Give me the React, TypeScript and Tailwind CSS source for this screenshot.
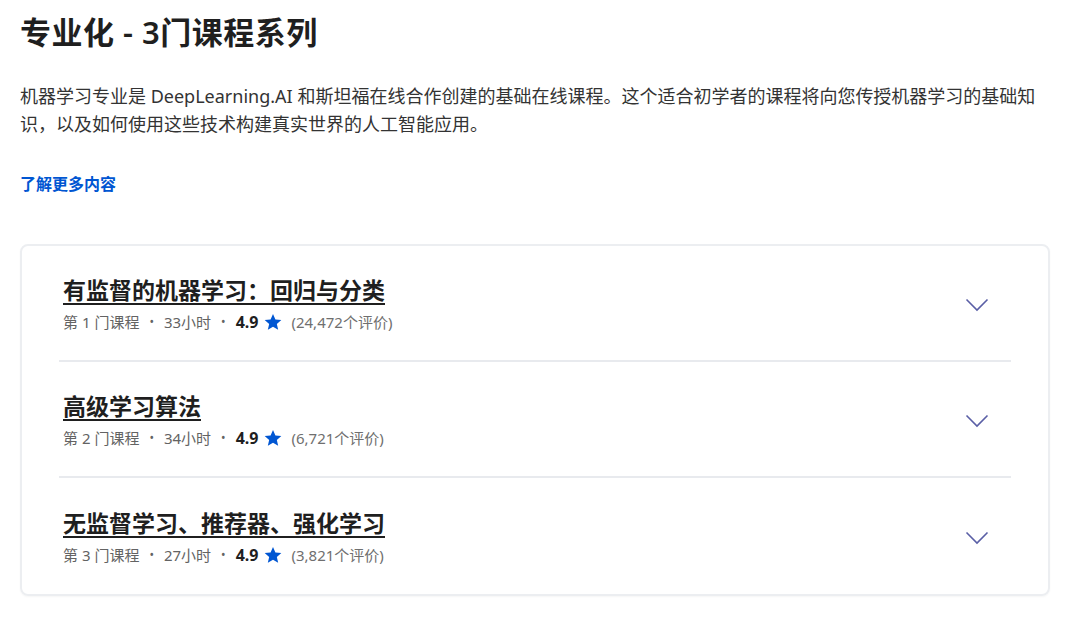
import React from 'react';

const courses = [
  { title: '有监督的机器学习：回归与分类', n: 1, hours: 33, reviews: '24,472' },
  { title: '高级学习算法', n: 2, hours: 34, reviews: '6,721' },
  { title: '无监督学习、推荐器、强化学习', n: 3, hours: 27, reviews: '3,821' },
];

const Star = () => (
  <svg width="20" height="20" viewBox="0 0 24 24" className="inline-block">
    <path
      d="M12 2.5l2.9 6.6 7.1.6-5.4 4.7 1.6 7-6.2-3.7-6.2 3.7 1.6-7L2 9.7l7.1-.6z"
      fill="#0056d2"
    />
  </svg>
);

const Chevron = () => (
  <svg width="24" height="14" viewBox="0 0 24 14" fill="none">
    <path d="M1.5 1.5L12 12L22.5 1.5" stroke="#5a5fa6" strokeWidth="1.6" />
  </svg>
);

const CourseRow = ({ c, last }: { c: (typeof courses)[number]; last: boolean }) => (
  <div className={`h-[116px] flex items-center justify-between pt-[2px] ${last ? '' : 'border-b-2 border-[#e8eaee]'}`}>
    <div className="pl-1">
      <div className="text-[23px] leading-[30px] font-bold text-[#1f1f1f] underline underline-offset-[4px] decoration-[2px]">
        {c.title}
      </div>
      <div className="mt-[6px] flex items-center text-[15px] leading-[22px] text-[#636363]">
        <span>第 {c.n} 门课程</span>
        <span className="mx-[10px] text-[12px]">•</span>
        <span>{c.hours}小时</span>
        <span className="mx-[10px] text-[12px]">•</span>
        <span className="font-bold text-[#1f1f1f] text-[16px] mr-[5px]">4.9</span>
        <Star />
        <span className="ml-[8px] text-[#6f6f6f]">({c.reviews}个评价)</span>
      </div>
    </div>
    <div className="mr-[22px] mt-[1px]">
      <Chevron />
    </div>
  </div>
);

export default function App() {
  return (
    <div className="w-[1080px] h-[623px] bg-white px-5 pt-[10px] font-['Noto_Sans','Noto_Sans_CJK_SC',sans-serif] text-[#1f1f1f]">
      <h1 className="text-[31px] leading-[44px] font-semibold tracking-[0.5px]">专业化 - 3门课程系列</h1>
      <p className="mt-[28px] text-[18px] leading-[28px] text-[#333]">
        机器学习专业是 DeepLearning.AI 和斯坦福在线合作创建的基础在线课程。这个适合初学者的课程将向您传授机器学习的基础知识，以及如何使用这些技术构建真实世界的人工智能应用。
      </p>
      <a className="block mt-[34px] text-[16px] leading-[24px] font-bold text-[#0056d2]">了解更多内容</a>
      <div className="mt-[48px] w-[1030px] border-2 border-[#eceef1] rounded-lg shadow-[0_1px_2px_rgba(0,0,0,0.04)] px-[37px]">
        {courses.map((c, i) => (
          <CourseRow key={c.n} c={c} last={i === courses.length - 1} />
        ))}
      </div>
    </div>
  );
}
